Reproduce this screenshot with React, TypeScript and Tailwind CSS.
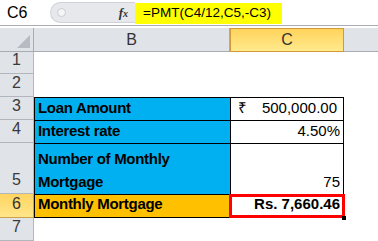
import React from "react";

const font = { fontFamily: '"Liberation Sans", Arial, sans-serif' };

function RowHead({ n, active }: { n: string; active?: boolean }) {
  return (
    <div
      className={
        active
          ? "flex items-end justify-center pb-[1px] border-b border-r border-[#c9a24a] bg-gradient-to-b from-[#ffd560] to-[#ffe58a] text-[16px] text-[#333]"
          : "flex items-end justify-center pb-[1px] border-b border-r border-[#b3b7bd] bg-[#e0e3e8] text-[16px] text-[#3a3a3a]"
      }
    >
      {n}
    </div>
  );
}

export default function App() {
  return (
    <div className="w-[378px] h-[241px] overflow-hidden bg-white" style={font}>
      {/* formula bar */}
      <div className="h-[26px] flex border-b border-[#a9adb3]">
        <div className="w-[50px] flex items-center pl-[7px] text-[16px] text-black">C6</div>
        <div className="w-[85px] my-[2px] rounded-l-full bg-[#e6e8eb] border border-r-0 border-[#cfd2d6] flex items-center relative">
          <div className="ml-[6px] w-[9px] h-[9px] rounded-full bg-[#f4f5f6] border border-[#c9ccd0]" />
          <div
            className="ml-auto mr-[7px] italic font-bold text-[13px] text-[#333]"
            style={{ fontFamily: '"Liberation Serif", serif' }}
          >
            f<span className="text-[10px]">x</span>
          </div>
        </div>
        <div className="w-[147px] mt-[3px] mb-[1px] bg-[#ffff00] flex items-center pl-[8px] text-[13.5px] text-black">
          =PMT(C4/12,C5,-C3)
        </div>
        <div className="flex-1" />
      </div>

      {/* sheet */}
      <div className="mt-[2px] grid grid-cols-[34px_196px_114px_1fr] grid-rows-[24px_22px_23px_23px_23px_51px_24px_23px]">
        {/* header row */}
        <div className="border-b border-r border-[#a8acb2] bg-[#e0e3e8] relative">
          <div
            className="absolute right-[3px] bottom-[3px] w-[13px] h-[13px] bg-[#b7bbc1]"
            style={{ clipPath: "polygon(100% 0, 100% 100%, 0 100%)" }}
          />
        </div>
        <div className="border-b border-r border-[#a8acb2] bg-[#e0e3e8] flex items-center justify-center text-[16px] text-[#333]">
          B
        </div>
        <div className="border border-[#d29a3a] bg-gradient-to-b from-[#ffd35a] to-[#ffea8c] flex items-center justify-center text-[16px] text-[#333]">
          C
        </div>
        <div className="border-b border-[#a8acb2] bg-[#e0e3e8]" />

        {/* row 1 */}
        <RowHead n="1" />
        <div />
        <div />
        <div />

        {/* row 2 */}
        <RowHead n="2" />
        <div />
        <div />
        <div />

        {/* row 3 */}
        <RowHead n="3" />
        <div className="border-t border-l border-black bg-[#00b0f0] flex items-end pl-[3px] pb-[1px] text-[15px] font-bold text-black tracking-[-0.3px]">
          Loan Amount
        </div>
        <div className="border-t border-l border-r border-black flex items-end justify-between pl-[7px] pr-[6px] pb-[1px] text-[15px] text-black">
          <span>₹</span>
          <span>500,000.00</span>
        </div>
        <div />

        {/* row 4 */}
        <RowHead n="4" />
        <div className="border-t border-l border-black bg-[#00b0f0] flex items-end pl-[3px] pb-[1px] text-[15px] font-bold text-black tracking-[-0.3px]">
          Interest rate
        </div>
        <div className="border-t border-l border-r border-black flex items-end justify-end pr-[3px] pb-[1px] text-[15px] text-black">
          4.50%
        </div>
        <div />

        {/* row 5 */}
        <RowHead n="5" />
        <div className="border-t border-l border-black bg-[#00b0f0] flex items-end pl-[3px] pb-[1px] text-[15px] leading-[23px] font-bold text-black tracking-[-0.3px]">
          Number of Monthly
          <br />
          Mortgage
        </div>
        <div className="border-t border-l border-r border-black flex items-end justify-end pr-[3px] pb-[1px] text-[15px] text-black">
          75
        </div>
        <div />

        {/* row 6 */}
        <RowHead n="6" active />
        <div className="border-t border-l border-b border-black bg-[#ffc000] flex items-end pl-[3px] pb-[2px] text-[15px] font-bold text-black tracking-[-0.3px]">
          Monthly Mortgage
        </div>
        <div className="relative border border-black flex items-end justify-end pr-[3px] pb-[2px] text-[15px] font-bold text-black">
          Rs. 7,660.46
          <div className="absolute -left-[2px] -top-[1px] -right-[2px] -bottom-[1px] border-[3px] border-[#ff0000]" />
          <div className="absolute -right-[3px] -bottom-[3px] w-[4px] h-[4px] bg-black" />
        </div>
        <div />

        {/* row 7 */}
        <RowHead n="7" />
        <div />
        <div />
        <div />
      </div>
    </div>
  );
}
